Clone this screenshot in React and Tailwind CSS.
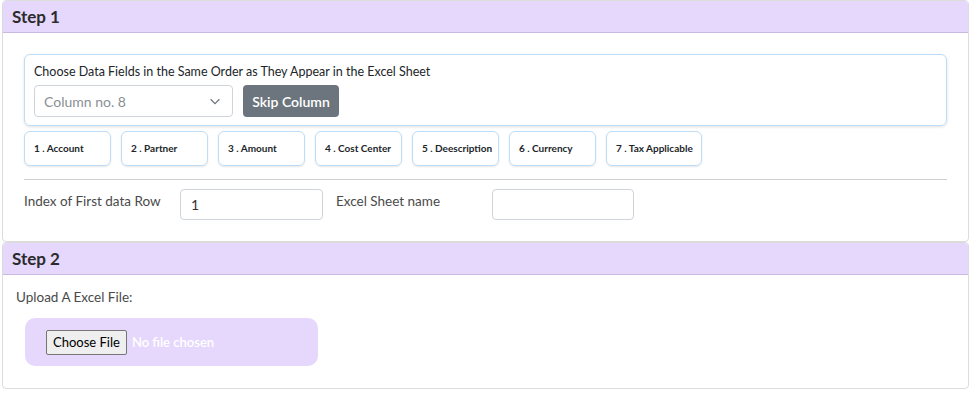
import React from "react";

const fields = [
  "1 . Account",
  "2 . Partner",
  "3 . Amount",
  "4 . Cost Center",
  "5 . Deescription",
  "6 . Currency",
  "7 . Tax Applicable",
];

const StepHeader = ({ title }) => (
  <div className="h-[32px] flex items-center px-[9px] bg-[#e6d8fd] border-b border-[#c9b9e2] rounded-t-[4px]">
    <h3 className="text-[17px] font-bold text-[#2b2b2b]">{title}</h3>
  </div>
);

export default function App() {
  return (
    <div className="w-[973px] h-[393px] bg-white font-['Lato',sans-serif] text-[#212529]">
      {/* Step 1 */}
      <div className="ml-[2px] w-[967px] border border-[#dcdcdc] rounded-[4px]">
        <StepHeader title="Step 1" />
        <div className="px-[21px] pt-[21px] pb-[21px]">
          <div className="border border-[#bcdcf7] rounded-[6px] shadow-[0_1px_3px_rgba(0,0,0,0.12)] px-[9px] pt-[8px] pb-[8px]">
            <p className="text-[12.5px] leading-[18px]">
              Choose Data Fields in the Same Order as They Appear in the Excel Sheet
            </p>
            <div className="flex gap-[10px] mt-[4px]">
              <div className="w-[199px] h-[32px] border border-[#ced4da] rounded-[4px] flex items-center justify-between pl-[9px] pr-[10px] text-[14px] text-[#8a8f94]">
                <span>Column no. 8</span>
                <svg width="14" height="14" viewBox="0 0 16 16" fill="none" stroke="#6c757d" strokeWidth="1.4">
                  <path d="M3 6l5 5 5-5" />
                </svg>
              </div>
              <button className="w-[96px] h-[32px] rounded-[4px] bg-[#6c757d] text-white text-[14px] font-semibold">
                Skip Column
              </button>
            </div>
          </div>
          <div className="flex gap-[10px] mt-[5px]">
            {fields.map((f, i) => (
              <div
                key={f}
                className={`${i === 6 ? "w-[96px]" : "w-[87px]"} h-[35px] border border-[#bcdcf7] rounded-[6px] shadow-[0_1px_2px_rgba(0,0,0,0.1)] flex items-center pl-[9px] text-[10px] font-bold`}
              >
                {f}
              </div>
            ))}
          </div>
          <hr className="mt-[13px] border-t border-[#cfcfcf]" />
          <div className="flex items-start mt-[9px] text-[13.5px] text-[#4a4a4a]">
            <span className="w-[156px] pt-[2px]">Index of First data Row</span>
            <input
              defaultValue="1"
              className="w-[143px] h-[31px] border border-[#ced4da] rounded-[4px] px-[10px] text-[14px] text-[#333] outline-none"
            />
            <span className="w-[156px] ml-[13px] pt-[2px]">Excel Sheet name</span>
            <input className="w-[142px] h-[31px] border border-[#ced4da] rounded-[4px] px-[10px] outline-none" />
          </div>
        </div>
      </div>

      {/* Step 2 */}
      <div className="ml-[2px] w-[967px] h-[147px] border border-[#dcdcdc] rounded-[4px]">
        <StepHeader title="Step 2" />
        <div className="px-[13px] pt-[12px]">
          <p className="text-[13.5px] text-[#4a4a4a]">Upload A Excel File:</p>
          <div className="ml-[9px] mt-[11px] w-[293px] h-[48px] rounded-[10px] bg-[#e6d8fd] flex items-center pl-[21px]">
            <input
              type="file"
              className="text-[13px] text-white font-semibold file:mr-[5px] file:h-[25px] file:px-[6px] file:border file:border-[#767676] file:rounded-[2px] file:bg-[#efefef] file:text-[#000] file:font-normal"
            />
          </div>
        </div>
      </div>
    </div>
  );
}
